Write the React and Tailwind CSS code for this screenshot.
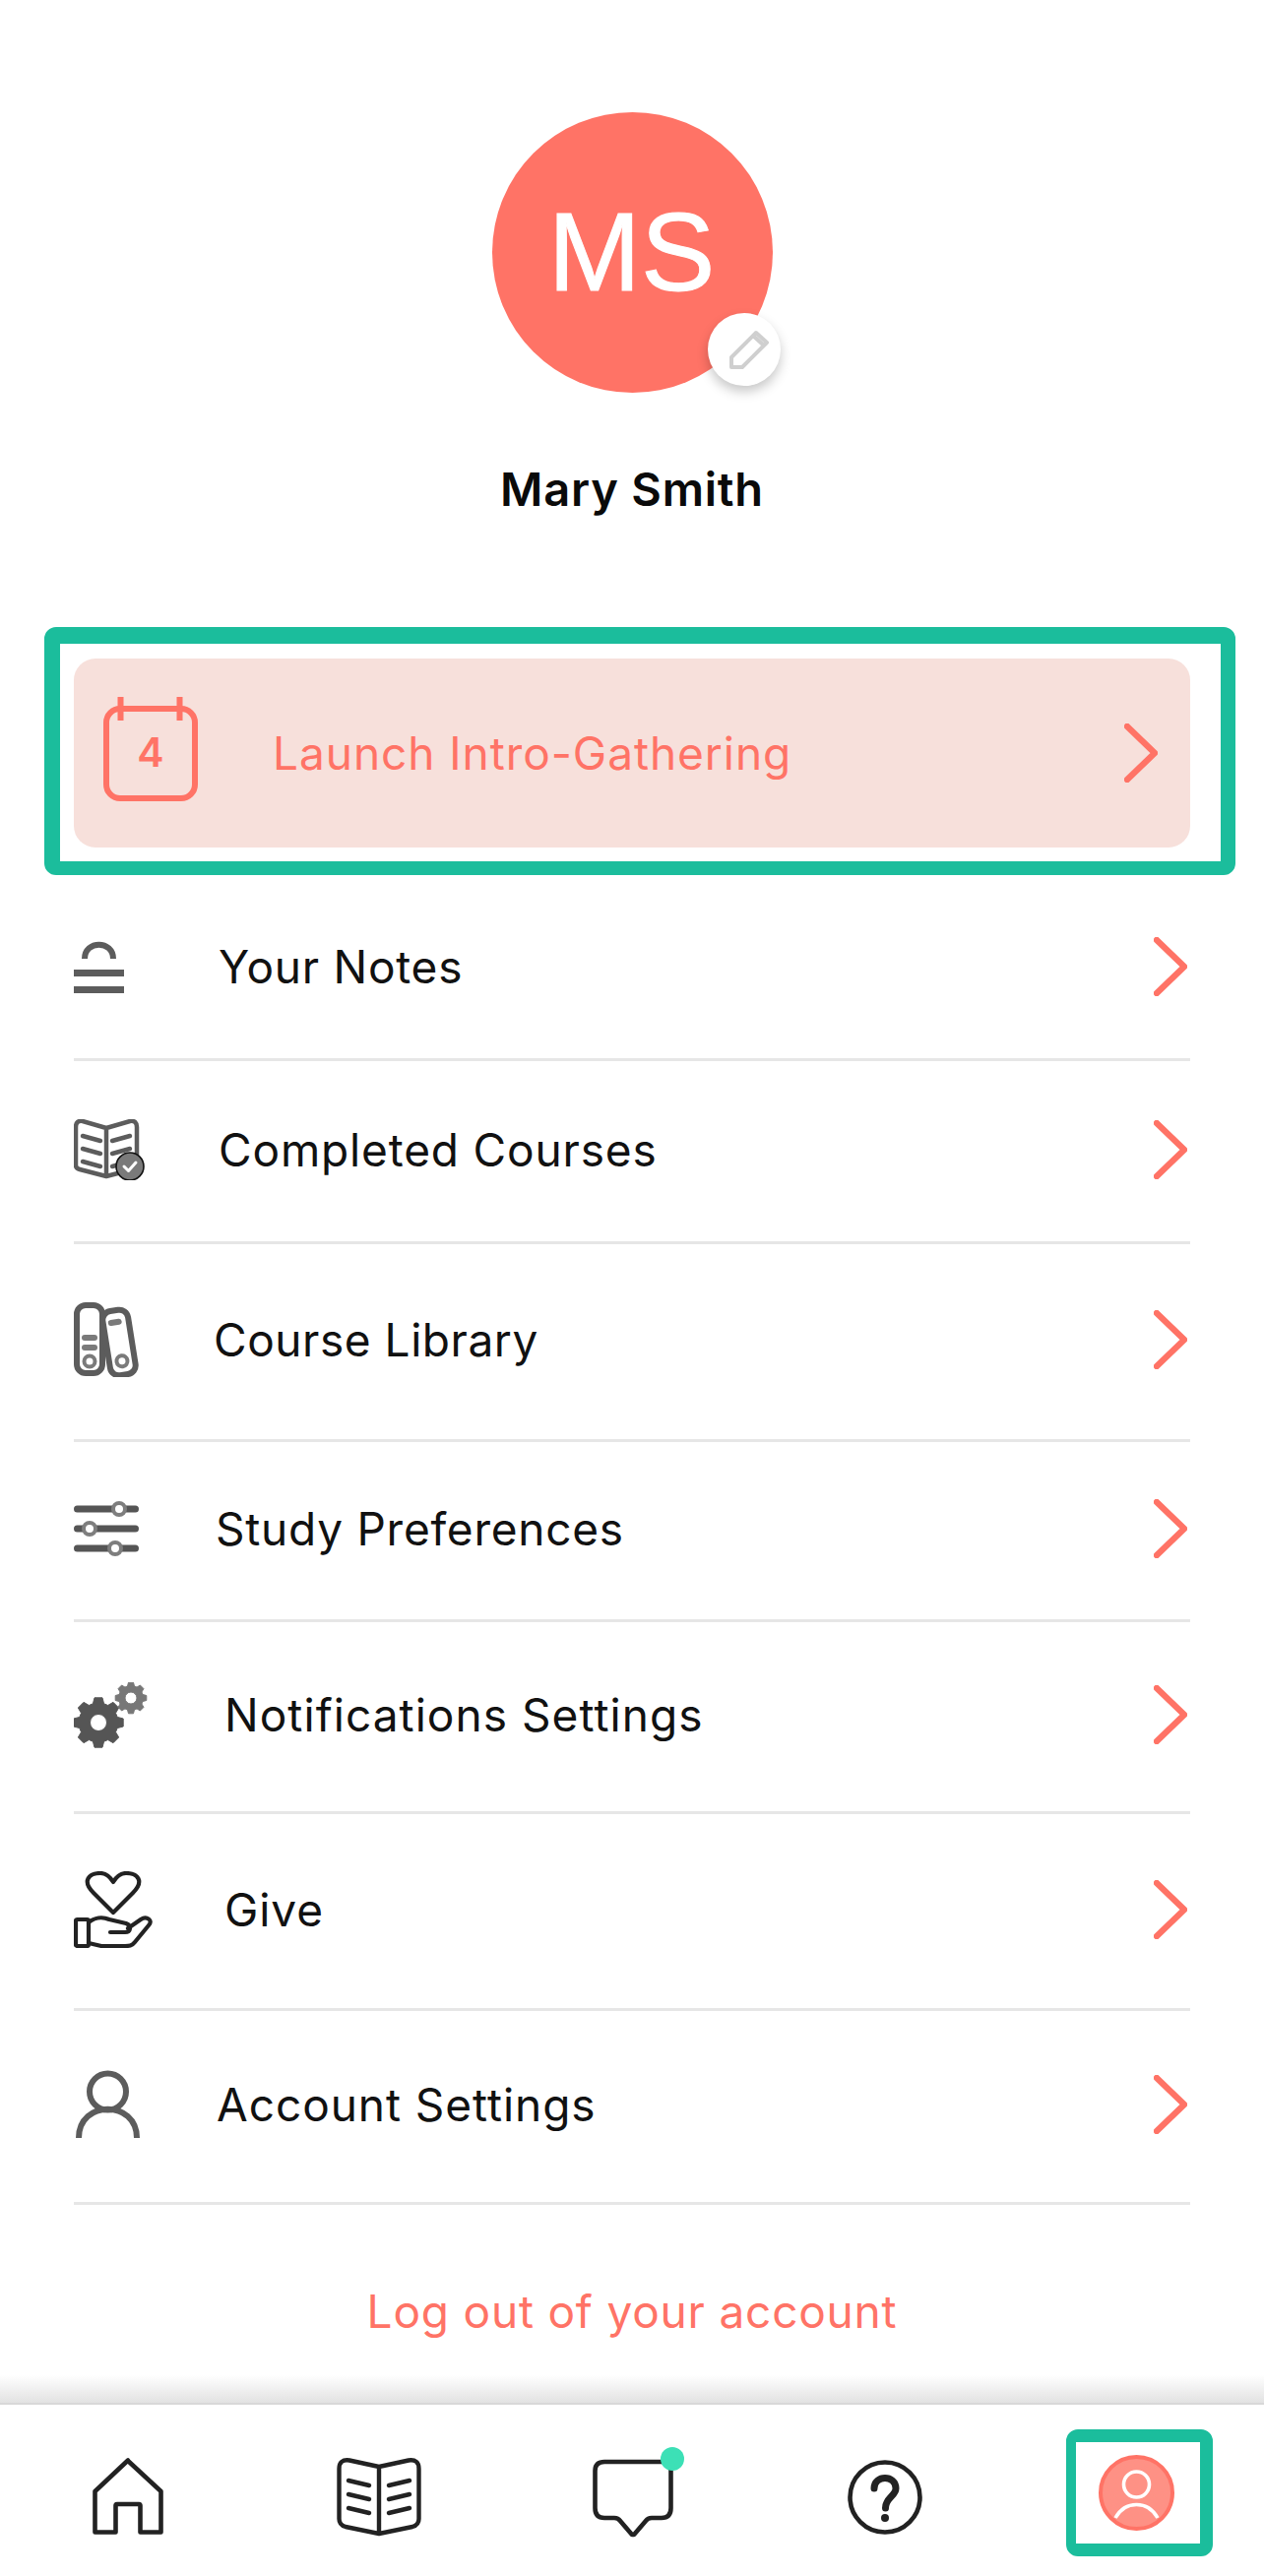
const CORAL = "#ff7366";
const GREY = "#5c5c5c";

function Chevron({ color = CORAL }) {
  return (
    <svg width="34" height="60" viewBox="0 0 34 60" fill="none" className="shrink-0">
      <path d="M3 3 L31 30 L3 57" stroke={color} strokeWidth="6.4" strokeLinecap="round" strokeLinejoin="round" />
    </svg>
  );
}

function NotesIcon() {
  return (
    <svg width="51" height="53" viewBox="0 0 51 53" fill="none">
      <path d="M11 18 C11 -1 40 -1 40 18" stroke={GREY} strokeWidth="6" />
      <rect x="0" y="29" width="51" height="7" fill={GREY} />
      <rect x="0" y="46" width="51" height="7" fill={GREY} />
    </svg>
  );
}

function BookCheckIcon() {
  return (
    <svg width="72" height="62" viewBox="0 0 72 62" fill="none">
      <path d="M33 9 L9 2 Q2 1 2 8 L2 47 Q2 50 6 51 L33 58 L60 51 Q64 50 64 47 L64 8 Q64 1 57 2 Z M33 9 L33 58" stroke={GREY} strokeWidth="4.5" strokeLinejoin="round" />
      <path d="M9 17 L27 22 M9 30 L27 35 M9 43 L27 48 M39 22 L57 17 M39 35 L57 30 M39 48 L50 45" stroke={GREY} strokeWidth="4.5" strokeLinecap="round" />
      <circle cx="57" cy="48" r="14" fill="#7a7a7a" stroke="#111" strokeWidth="1.6" />
      <path d="M51 48 L55.5 52.5 L63 44" stroke="#fff" strokeWidth="3" strokeLinecap="round" strokeLinejoin="round" />
    </svg>
  );
}

function LibraryIcon() {
  return (
    <svg width="68" height="76" viewBox="0 0 68 76" fill="none">
      <rect x="3" y="3" width="26" height="69" rx="9" stroke={GREY} strokeWidth="6" />
      <rect x="8" y="33" width="16" height="6" rx="3" fill="#7a7a7a" />
      <rect x="8" y="43" width="16" height="6" rx="3" fill="#7a7a7a" />
      <circle cx="16" cy="60" r="5.5" stroke="#7a7a7a" strokeWidth="4" />
      <g transform="rotate(-9 46 41)">
        <rect x="33" y="8" width="26" height="66" rx="9" stroke={GREY} strokeWidth="6" />
        <rect x="38" y="17" width="14" height="6" rx="3" fill="#7a7a7a" />
        <circle cx="46" cy="60" r="5.5" stroke="#7a7a7a" strokeWidth="4" />
      </g>
    </svg>
  );
}

function SlidersIcon() {
  return (
    <svg width="66" height="58" viewBox="0 0 66 58" fill="none">
      <path d="M3.5 9 H62.5 M3.5 29 H62.5 M3.5 49 H62.5" stroke="#555" strokeWidth="7" strokeLinecap="round" />
      <circle cx="46" cy="9" r="6" fill="#fff" stroke="#7e7e7e" strokeWidth="4" />
      <circle cx="16" cy="29" r="6" fill="#fff" stroke="#7e7e7e" strokeWidth="4" />
      <circle cx="42" cy="49" r="6" fill="#fff" stroke="#7e7e7e" strokeWidth="4" />
    </svg>
  );
}

function gearPath(cx, cy, outer, inner, hole, teeth) {
  let d = "";
  const step = (Math.PI * 2) / teeth;
  for (let i = 0; i < teeth; i++) {
    const a = i * step - Math.PI / 2;
    const pts = [
      [inner, a - step * 0.36],
      [outer, a - step * 0.2],
      [outer, a + step * 0.2],
      [inner, a + step * 0.36],
    ];
    pts.forEach(([r, t], j) => {
      d += `${i === 0 && j === 0 ? "M" : "L"}${(cx + r * Math.cos(t)).toFixed(2)} ${(cy + r * Math.sin(t)).toFixed(2)} `;
    });
  }
  d += `Z M${cx + hole} ${cy} A${hole} ${hole} 0 1 0 ${cx - hole} ${cy} A${hole} ${hole} 0 1 0 ${cx + hole} ${cy} Z`;
  return d;
}

function GearsIcon() {
  return (
    <svg width="75" height="67" viewBox="0 0 75 67" fill="none">
      <path d={gearPath(25, 41, 25.5, 20, 8.5, 8)} fill="#555" fillRule="evenodd" stroke="#555" strokeWidth="1" strokeLinejoin="round" />
      <path d={gearPath(58, 16, 16, 12.5, 6, 8)} fill="#777" fillRule="evenodd" stroke="#777" strokeWidth="1" strokeLinejoin="round" />
    </svg>
  );
}

function GiveIcon() {
  return (
    <svg width="80" height="78" viewBox="0 0 80 78" fill="none" stroke="#222" strokeWidth="4.2" strokeLinecap="round" strokeLinejoin="round">
      <path d="M40 42 L20 22 C8 10 15 2 27 2 C33 2 37 6 40 11 C43 6 47 2 53 2 C65 2 72 10 60 22 Z" />
      <rect x="2" y="49" width="13" height="27" rx="1.5" />
      <path d="M15 52 C21 47 29 46 36 49 L53 53 C59 55 58 62 52 62 L37 62" />
      <path d="M55 58 L68 49 C74 45 81 50 76 55 L62 72 C59 76 56 76 52 76 L28 76 L15 73" />
    </svg>
  );
}

function UserIcon() {
  return (
    <svg width="66" height="70" viewBox="0 0 66 70" fill="none" stroke={GREY} strokeWidth="6">
      <circle cx="32.5" cy="22" r="18.5" />
      <path d="M3 69 C3 30 62 30 62 69" />
    </svg>
  );
}

function Row({ icon, label, labelClass, rowClass }) {
  return (
    <div className={`flex items-center ml-[75px] w-[1134px] ${rowClass}`}>
      <div className="w-[147px] shrink-0 flex items-center">{icon}</div>
      <span className={`flex-1 text-[#111] ${labelClass}`}>{label}</span>
      <div className="mr-[3px] flex"><Chevron /></div>
    </div>
  );
}

function HomeIcon() {
  return (
    <svg width="72" height="78" viewBox="0 0 72 78" fill="none" stroke="#222" strokeWidth="4.6" strokeLinejoin="round">
      <path d="M2.5 34 L36 2.5 Q36 2.5 36 3 L69.5 34 L69.5 75.5 L48.5 75.5 L48.5 48.5 Q48.5 47 47 47 L25 47 Q23.5 47 23.5 48.5 L23.5 75.5 L2.5 75.5 Z" />
    </svg>
  );
}

function NavBookIcon() {
  return (
    <svg width="86" height="80" viewBox="0 0 86 80" fill="none" stroke="#222" strokeWidth="4.4" strokeLinecap="round" strokeLinejoin="round">
      <path d="M43 9 L13 2.5 Q2.5 1 2.5 11 L2.5 62 Q2.5 68 9 70 L43 77 L77 70 Q83.5 68 83.5 62 L83.5 11 Q83.5 1 73 2.5 Z M43 9 L43 77" />
      <path d="M12 23 L33 28 M12 37 L33 42 M12 51 L33 56 M53 28 L74 23 M53 42 L74 37 M53 56 L74 51" />
    </svg>
  );
}

function ChatIcon() {
  return (
    <svg width="82" height="80" viewBox="0 0 82 80" fill="none" stroke="#222" strokeWidth="4.6" strokeLinejoin="round">
      <path d="M12 3 L70 3 Q79.5 3 79.5 12 L79.5 50 Q79.5 60 70 60 L60 60 Q56 60 54 63 L42 77 L40 77 L28 63 Q26 60 22 60 L12 60 Q2.5 60 2.5 50 L2.5 12 Q2.5 3 12 3 Z" />
    </svg>
  );
}

function HelpIcon() {
  return (
    <svg width="76" height="78" viewBox="0 0 76 78" fill="none">
      <circle cx="38" cy="39" r="35.5" stroke="#222" strokeWidth="4.6" />
      <path d="M27 30 C27 16 49 16 49 30 C49 38 38.5 39 38.5 50" stroke="#222" strokeWidth="7" strokeLinecap="round" />
      <circle cx="38" cy="60" r="4" fill="#222" />
    </svg>
  );
}

function ProfileIcon() {
  return (
    <svg width="77" height="77" viewBox="0 0 77 77" fill="none">
      <circle cx="38.5" cy="38.5" r="36.5" fill="#fe9185" stroke={CORAL} strokeWidth="4" />
      <circle cx="38.5" cy="30" r="13" stroke="#fff" strokeWidth="3.6" />
      <path d="M17 64 C27 46 50 46 60 64" stroke="#fff" strokeWidth="3.6" />
    </svg>
  );
}

export default function App() {
  const text = "font-['Inter',sans-serif] text-[46px] leading-[56px]";
  const label = `${text} tracking-[0.95px]`;
  const line = "border-b-[3px] border-[#e6e6e6]";
  return (
    <div className="w-[1284px] h-[2617px] bg-white flex flex-col overflow-hidden font-['Inter',sans-serif]">
      <div className="pt-[114px] flex flex-col items-center">
        <div className="relative w-[285px] h-[285px] ml-px rounded-full bg-[#ff7366] flex items-center justify-center">
          <span className="font-['Liberation_Sans',sans-serif] text-[113px] leading-none text-white -ml-[2px] [-webkit-text-stroke:1px_white]">MS</span>
          <div className="absolute left-[219px] top-[204px] w-[74px] h-[74px] rounded-full bg-white shadow-[0_6px_12px_rgba(0,0,0,0.22)] flex items-center justify-center">
            <svg width="42" height="42" viewBox="0 0 42 42" fill="none" stroke="#cfcfcf" strokeWidth="4" strokeLinejoin="round" className="ml-[9px]">
              <path d="M3 29 L28 4 L39 14 L14 39 L3 39 Z M25 7 L36 17" />
            </svg>
          </div>
        </div>
        <div className="mt-[70px] text-[47px] leading-[56px] font-semibold text-[#0a0a0a] tracking-[0.8px]">Mary Smith</div>
      </div>

      <div className="mt-[112px] ml-[45px] w-[1210px] h-[252px] rounded-[12px] border-[#1bbd9c] border-t-[17px] border-b-[14px] border-l-[16px] border-r-[15px]">
        <div className="ml-[14px] mt-[15px] w-[1134px] h-[192px] rounded-[22px] bg-[#f7e0db] flex items-center">
          <svg width="96" height="106" viewBox="0 0 96 106" fill="none" className="ml-[30px] mb-[9px] shrink-0">
            <rect x="3" y="12" width="90" height="91" rx="14" stroke={CORAL} strokeWidth="6" />
            <path d="M17.5 0 V24 M77.5 0 V24" stroke={CORAL} strokeWidth="6" />
            <text x="48" y="71" textAnchor="middle" fontSize="41" fontWeight="600" fontFamily="Inter, sans-serif" fill={CORAL}>4</text>
          </svg>
          <span className={`ml-[76px] flex-1 text-[#ff7366] ${label}`}>Launch Intro-Gathering</span>
          <div className="mr-[33px] flex"><Chevron /></div>
        </div>
      </div>

      <Row icon={<NotesIcon />} label="Your Notes" labelClass={`${text} tracking-[0.75px]`} rowClass={`h-[189px] ${line}`} />
      <Row icon={<BookCheckIcon />} label="Completed Courses" labelClass={`${text} tracking-[0.85px]`} rowClass={`h-[186px] pb-[4px] ${line}`} />
      <Row icon={<LibraryIcon />} label="Course Library" labelClass={`${text} tracking-[0.55px] -ml-[5px]`} rowClass={`h-[201px] pb-[4px] ${line}`} />
      <Row icon={<SlidersIcon />} label="Study Preferences" labelClass={`${text} tracking-[0.75px] -ml-[3px]`} rowClass={`h-[183px] pb-[4px] ${line}`} />
      <Row icon={<GearsIcon />} label="Notifications Settings" labelClass={`${text} tracking-[1.05px] ml-[6px]`} rowClass={`h-[195px] pb-[4px] ${line}`} />
      <Row icon={<GiveIcon />} label="Give" labelClass={`${label} ml-[6px]`} rowClass={`h-[200px] pb-[4px] ${line}`} />
      <Row icon={<div className="ml-[2px] flex"><UserIcon /></div>} label="Account Settings" labelClass={`${label} -ml-[2px]`} rowClass={`h-[197px] pb-[4px] ${line}`} />

      <div className="flex-1 flex flex-col">
        <div className={`mt-[80px] text-center text-[#ff7366] ${text} tracking-[0.8px]`}>Log out of your account</div>
        <div className="mt-auto h-[28px] bg-gradient-to-b from-white to-[#e2e2e2]" />
        <div className="h-[176px] border-t-[2px] border-[#d8d8d8] bg-white grid grid-cols-5">
          <div className="flex justify-center pt-[54px] pl-[3px]"><HomeIcon /></div>
          <div className="flex justify-center pt-[54px]"><NavBookIcon /></div>
          <div className="flex justify-center pt-[55px] pl-[2px]">
            <div className="relative h-[80px]">
              <ChatIcon />
              <div className="absolute left-[69px] -top-[12px] w-[24px] h-[24px] rounded-full bg-[#3ce0b6]" />
            </div>
          </div>
          <div className="flex justify-center pt-[55px]"><HelpIcon /></div>
          <div className="flex justify-center pt-[25px] pl-[3px]">
            <div className="w-[149px] h-[129px] rounded-[12px] border-[#1bbd9c] border-t-[13px] border-b-[13px] border-l-[10px] border-r-[13px] flex items-center justify-center">
              <div className="mr-[3px] flex"><ProfileIcon /></div>
            </div>
          </div>
        </div>
      </div>
    </div>
  );
}
